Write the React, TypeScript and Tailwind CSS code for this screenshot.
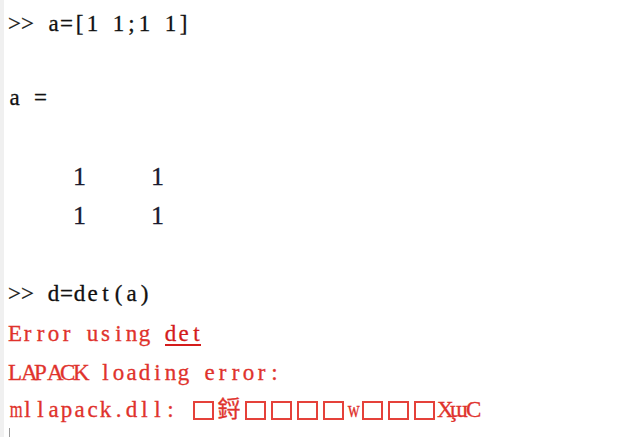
import React from "react";

const Cells = ({ text }: { text: string }) => {
  return (
    <>
      {text.split("").map((ch, i) => (
        <span
          key={i}
          className={`inline-block w-[13px] text-center ${ch === "m" || ch === "w" ? "scale-x-[0.72]" : ""}`}
        >
          {ch === " " ? "\u00a0" : ch}
        </span>
      ))}
    </>
  );
};

const Box = () => (
  <span className="inline-block w-[26px] align-[-3px]">
    <span className="mx-auto block h-[19px] w-[21px] border-2 border-[#e5413a]" />
  </span>
);

const Line = ({ h, children, className }: { h: string; children?: React.ReactNode; className?: string }) => (
  <div className={`${h} leading-[39px] whitespace-nowrap ${className ?? ""}`}>{children}</div>
);

export default function App() {
  return (
    <div className="flex h-[437px] w-[640px] overflow-hidden bg-white">
      <div className="w-[4px] shrink-0 bg-[#f0f0f0]" />
      <div className="relative flex-1 pl-[4px] pt-[4px] text-[23px] text-[#111111] [-webkit-text-stroke:0.3px_currentColor] [font-family:'Liberation_Serif','Noto_Sans_CJK_TC',serif]">
        <Line h="h-[37px]">
          <Cells text=">> a=[1 1;1 1]" />
        </Line>
        <Line h="h-[37px]" />
        <Line h="h-[40px]">
          <Cells text="a =" />
        </Line>
        <Line h="h-[39px]" />
        <Line h="h-[39px]" className="text-[26px] text-[#1a1a2e]">
          <Cells text="     1     1" />
        </Line>
        <Line h="h-[39px]" className="text-[26px] text-[#1a1a2e]">
          <Cells text="     1     1" />
        </Line>
        <Line h="h-[39px]" />
        <Line h="h-[40px]">
          <Cells text=">> d=det(a)" />
        </Line>
        <Line h="h-[39px]" className="text-[#e0322c]">
          <Cells text="Error using " />
          <span className="relative inline-block text-[#d41c1c]">
            <Cells text="det" />
            <span className="absolute left-[1px] right-[2px] top-[30px] h-[1.5px] bg-[#d41c1c]" />
          </span>
        </Line>
        <Line h="h-[37px]" className="text-[#e0322c]">
          <Cells text="LAPACK loading error:" />
        </Line>
        <Line h="h-[39px]" className="text-[#e0322c]">
          <Cells text="mllapack.dll: " />
          <Box />
          <span className="inline-block w-[26px] text-center">鋝</span>
          <Box />
          <Box />
          <Box />
          <Box />
          <Cells text="w" />
          <Box />
          <Box />
          <Box />
          <span className="inline-block w-[13px] text-center">X̧</span>
          <span className="inline-block w-[16px] text-center">ɯ</span>
          <span className="inline-block w-[13px] text-center">C</span>
        </Line>
        <div className="absolute bottom-0 left-[5px] h-[9px] w-px bg-[#9a9a9a]" />
      </div>
    </div>
  );
}
